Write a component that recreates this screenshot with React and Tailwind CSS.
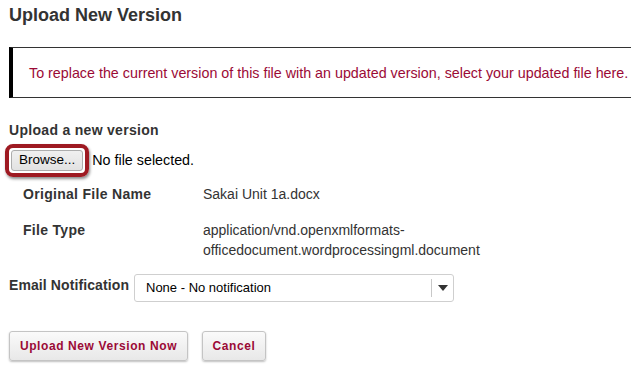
export default function App() {
  const font = { fontFamily: '"Liberation Sans", Arial, sans-serif' };
  return (
    <div style={font} className="w-[631px] h-[375px] overflow-hidden bg-white text-[#333] pl-[9px]">
      <h2 className="text-[18px] font-bold leading-[22px] pt-[4px] text-[#333]">Upload New Version</h2>
      <div className="mt-[21px] h-[51px] border-l-[4px] border-l-black border-y border-y-[#333] flex items-center pl-[16px] w-[640px] whitespace-nowrap">
        <span className="text-[14.3px] text-[#9b0a36] pt-[2px]">To replace the current version of this file with an updated version, select your updated file here.</span>
      </div>
      <div className="mt-[24px] text-[14px] tracking-[0.3px] font-bold leading-[16px]">Upload a new version</div>
      <div className="mt-[6px] flex items-center">
        <div className="rounded-[8px] border-[4px] border-[#9e1a22] p-[2px] shadow-[1px_2px_3px_rgba(0,0,0,0.45)] -ml-[4px]">
          <div className="h-[21px] px-[7px] flex items-center rounded-[3px] border border-[#adadad] bg-gradient-to-b from-[#f0f0f0] to-[#e2e2e2] text-[13.5px] text-black">Browse...</div>
        </div>
        <span className="ml-[3px] text-[14.3px] text-black">No file selected.</span>
      </div>
      <div className="mt-[7px] pl-[14px] text-[14px] leading-[20px]">
        <div className="flex">
          <div className="w-[180px] font-bold tracking-[0.3px]">Original File Name</div>
          <div>Sakai Unit 1a.docx</div>
        </div>
        <div className="flex mt-[16px]">
          <div className="w-[180px] font-bold tracking-[0.3px]">File Type</div>
          <div>application/vnd.openxmlformats-<br />officedocument.wordprocessingml.document</div>
        </div>
      </div>
      <div className="mt-[14px] flex items-start">
        <div className="text-[14px] tracking-[0.1px] font-bold pt-[2px] w-[125px] leading-[18px]">Email Notification</div>
        <div className="w-[320px] h-[28px] border border-[#cfcfcf] rounded-[3px] flex items-center text-[13px] text-black">
          <span className="pl-[11px] flex-1">None - No notification</span>
          <span className="w-px h-[18px] bg-[#c8c8c8]"></span>
          <span className="w-[21px] flex justify-center">
            <svg width="10" height="6" viewBox="0 0 10 6"><path d="M0 0 L10 0 L5 6 Z" fill="#333" /></svg>
          </span>
        </div>
      </div>
      <div className="mt-[29px] flex gap-[14px]">
        <button className="h-[30px] w-[179px] rounded-[3px] border border-[#c4c4c4] bg-gradient-to-b from-[#fafafa] to-[#e8e8e8] shadow-[0_1px_2px_rgba(0,0,0,0.25)] text-[12px] font-bold tracking-[0.6px] text-[#9b0a36]">Upload New Version Now</button>
        <button className="h-[30px] w-[64px] rounded-[3px] border border-[#c4c4c4] bg-gradient-to-b from-[#fafafa] to-[#e8e8e8] shadow-[0_1px_2px_rgba(0,0,0,0.25)] text-[12px] font-bold tracking-[0.6px] text-[#9b0a36]">Cancel</button>
      </div>
    </div>
  );
}
